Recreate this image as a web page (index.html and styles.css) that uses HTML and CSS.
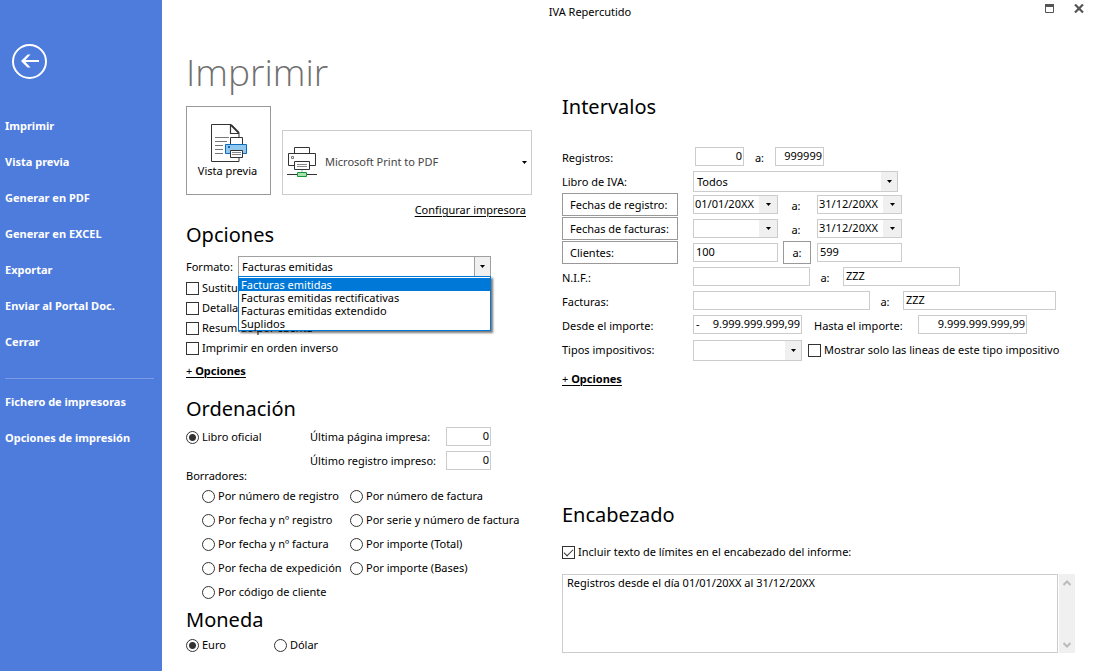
FILE: index.html
```html
<!DOCTYPE html>
<html lang="es">
<head>
<meta charset="utf-8">
<title>IVA Repercutido</title>
<link rel="stylesheet" href="styles.css">
</head>
<body>
<div class="app">
  <aside class="sidebar">
    <button class="back" type="button" aria-label="Volver">
      <svg width="35" height="35" viewBox="0 0 35 35" fill="none" stroke="#fff"><circle cx="17.500" cy="17.500" r="16.500" stroke-width="2"/><path d="M27 17H11" stroke-width="2"/><path d="M18.500 10.500H15.500L9 17L15.500 23.500H18.500L12.500 17z" fill="#fff" stroke="none"/></svg>
    </button>
    <nav class="menu">
      <a href="#">Imprimir</a>
      <a href="#">Vista previa</a>
      <a href="#">Generar en PDF</a>
      <a href="#">Generar en EXCEL</a>
      <a href="#">Exportar</a>
      <a href="#">Enviar al Portal Doc.</a>
      <a href="#">Cerrar</a>
      <hr>
      <a href="#">Fichero de impresoras</a>
      <a href="#">Opciones de impresión</a>
    </nav>
  </aside>

  <div class="window">
    <header class="titlebar">
      <span class="caption">IVA Repercutido</span>
      <div class="controls">
        <button type="button" aria-label="Maximizar"><svg width="10" height="10" viewBox="0 0 10 10"><path d="M.5 1.500h8v7h-8z" fill="none" stroke="#555"/><path d="M0 0h9v3H0z" fill="#555"/></svg></button>
        <button type="button" aria-label="Cerrar ventana"><svg width="10" height="10" viewBox="0 0 10 10"><path d="M1 .5l8 8M9 .5L1 8.500" stroke="#555" stroke-width="2.200"/></svg></button>
      </div>
    </header>

    <main class="content">
      <div class="col-left">
        <h1>Imprimir</h1>
        <div class="printer-row">
          <button class="preview" type="button">
            <svg width="37" height="39" viewBox="0 0 37 39" fill="none" stroke="#333"><path d="M.5.500H20L28 9V37.500H.5z" fill="#fff"/><path d="M19.500.500V9.500H28" stroke-width="1.200"/><path d="M20 1l8 8" stroke-width="1.800"/><path d="M4 13.500h14M4 17.500h12M4 21.500h8M4 25.500h8M4 29.500h8" stroke="#777"/><path d="M19.500 13.500h12v8h-12z" fill="#fff"/><path d="M14.500 20.500h21v9h-21z" fill="#90c8f0" stroke="#0f6cbd"/><path d="M17 23h2" stroke="#0f6cbd" stroke-width="2"/><path d="M19.500 26.500h12v7h-12z" fill="#fff"/><path d="M21 28.500h9M21 30.500h9" stroke="#888"/></svg>
            Vista previa
          </button>
          <button class="printer" type="button">
            <svg width="30" height="31" viewBox="0 0 30 31" fill="none" stroke="#333"><path d="M7.500 6.500V.5h15v6"/><path d="M7 18.500H1.500v-12h27v12H22" fill="#fff"/><path d="M7.500 6.500h15"/><path d="M4.500 9.500h2v2h-2z" stroke="#777"/><path d="M7.500 14.500h15v8h-15z" fill="#fff"/><path d="M10 17.500h10M10 19.500h10" stroke="#888"/><path d="M15 23v3" stroke="#aaa"/><path d="M0 27.500h30"/><path d="M10.500 25.500h9v4h-9z" fill="#a8e0ae" stroke="#109a3e"/></svg>
            <span>Microsoft Print to PDF</span>
            <svg class="arrow" width="5" height="3" viewBox="0 0 5 3"><path d="M0 0h5L2.500 3z"/></svg>
          </button>
        </div>
        <a class="link configure" href="#">Configurar impresora</a>

        <section class="options">
          <h2>Opciones</h2>
          <div class="format">
            <label for="formato">Formato:</label>
            <div class="combo strong">
              <select id="formato"><option>Facturas emitidas</option><option>Facturas emitidas rectificativas</option><option>Facturas emitidas extendido</option><option>Suplidos</option></select>
              <svg class="arrow" width="5" height="3" viewBox="0 0 5 3"><path d="M0 0h5L2.500 3z"/></svg>
              <ul class="list" role="listbox" aria-label="Formato">
                <li class="selected" role="option" aria-selected="true">Facturas emitidas</li>
                <li role="option">Facturas emitidas rectificativas</li>
                <li role="option">Facturas emitidas extendido</li>
                <li role="option">Suplidos</li>
              </ul>
            </div>
          </div>
          <label class="check"><input type="checkbox">Sustituir</label>
          <label class="check"><input type="checkbox">Detallar</label>
          <label class="check"><input type="checkbox">Resumido por cuenta</label>
          <label class="check"><input type="checkbox">Imprimir en orden inverso</label>
          <a class="link more" href="#">+ <b>Opciones</b></a>
        </section>

        <section class="order">
          <h2>Ordenación</h2>
          <div class="official">
            <label class="radio"><input type="radio" name="orden" checked>Libro oficial</label>
            <div class="last">
              <label for="pagina">Última página impresa:</label><input class="field num" id="pagina" type="text" value="0">
              <label for="registro">Último registro impreso:</label><input class="field num" id="registro" type="text" value="0">
            </div>
          </div>
          <p class="drafts-title">Borradores:</p>
          <div class="drafts">
            <label class="radio"><input type="radio" name="orden">Por número de registro</label>
            <label class="radio"><input type="radio" name="orden">Por número de factura</label>
            <label class="radio"><input type="radio" name="orden">Por fecha y nº registro</label>
            <label class="radio"><input type="radio" name="orden">Por serie y número de factura</label>
            <label class="radio"><input type="radio" name="orden">Por fecha y nº factura</label>
            <label class="radio"><input type="radio" name="orden">Por importe (Total)</label>
            <label class="radio"><input type="radio" name="orden">Por fecha de expedición</label>
            <label class="radio"><input type="radio" name="orden">Por importe (Bases)</label>
            <label class="radio"><input type="radio" name="orden">Por código de cliente</label>
          </div>
        </section>

        <section class="currency">
          <h2>Moneda</h2>
          <div class="currency-row">
            <label class="radio"><input type="radio" name="moneda" checked>Euro</label>
            <label class="radio"><input type="radio" name="moneda">Dólar</label>
          </div>
        </section>
      </div>

      <div class="col-right">
        <section class="ranges">
          <h2>Intervalos</h2>
          <div class="row"><label class="name" for="reg1">Registros:</label><input class="field num w-reg inset" id="reg1" type="text" value="0"><label class="to narrow" for="reg2">a:</label><input class="field num w-reg" id="reg2" type="text" value="999999"></div>
          <div class="row"><label class="name" for="libro">Libro de IVA:</label>
            <div class="combo w-book"><select id="libro"><option>Todos</option></select><svg class="arrow" width="5" height="3" viewBox="0 0 5 3"><path d="M0 0h5L2.500 3z"/></svg></div></div>
          <div class="row"><button class="name boxed" type="button">Fechas de registro:</button>
            <div class="date"><input type="text" aria-label="Registro desde" value="01/01/20XX"><button type="button" aria-label="Elegir"><svg width="5" height="3" viewBox="0 0 5 3"><path d="M0 0h5L2.500 3z"/></svg></button></div>
            <span class="to">a:</span>
            <div class="date"><input type="text" aria-label="Registro hasta" value="31/12/20XX"><button type="button" aria-label="Elegir"><svg width="5" height="3" viewBox="0 0 5 3"><path d="M0 0h5L2.500 3z"/></svg></button></div></div>
          <div class="row"><button class="name boxed" type="button">Fechas de facturas:</button>
            <div class="date"><input type="text" aria-label="Factura desde" value=""><button type="button" aria-label="Elegir"><svg width="5" height="3" viewBox="0 0 5 3"><path d="M0 0h5L2.500 3z"/></svg></button></div>
            <span class="to">a:</span>
            <div class="date"><input type="text" aria-label="Factura hasta" value="31/12/20XX"><button type="button" aria-label="Elegir"><svg width="5" height="3" viewBox="0 0 5 3"><path d="M0 0h5L2.500 3z"/></svg></button></div></div>
          <div class="row"><button class="name boxed" type="button">Clientes:</button><input class="field w-date" type="text" aria-label="Cliente desde" value="100"><button class="to-button" type="button">a:</button><input class="field w-date" type="text" aria-label="Cliente hasta" value="599"></div>
          <div class="row"><label class="name" for="nif1">N.I.F.:</label><input class="field w-nif" id="nif1" type="text"><label class="to mid" for="nif2">a:</label><input class="field w-nif" id="nif2" type="text" value="ZZZ"></div>
          <div class="row"><label class="name" for="fac1">Facturas:</label><input class="field w-fac1" id="fac1" type="text"><label class="to mid" for="fac2">a:</label><input class="field w-fac2" id="fac2" type="text" value="ZZZ"></div>
          <div class="row"><label class="name" for="imp1">Desde el importe:</label>
            <div class="amount"><span>-</span><input id="imp1" type="text" value="9.999.999.999,99"></div>
            <label class="until" for="imp2">Hasta el importe:</label><input class="field num w-amount" id="imp2" type="text" value="9.999.999.999,99"></div>
          <div class="row"><label class="name" for="tipos">Tipos impositivos:</label>
            <div class="combo w-amount low"><select id="tipos"><option></option></select><svg class="arrow" width="5" height="3" viewBox="0 0 5 3"><path d="M0 0h5L2.500 3z"/></svg></div>
            <label class="check only"><input type="checkbox">Mostrar solo las lineas de este tipo impositivo</label></div>
          <a class="link more" href="#">+ <b>Opciones</b></a>
        </section>

        <section class="heading">
          <h2>Encabezado</h2>
          <label class="check"><input type="checkbox" checked>Incluir texto de límites en el encabezado del informe:</label>
          <div class="memo">
            <textarea aria-label="Texto de límites">Registros desde el día 01/01/20XX al 31/12/20XX</textarea>
            <div class="scroll">
              <svg width="8" height="6" viewBox="0 0 8 6"><path d="M.5 5L4 1.500L7.500 5" fill="none" stroke="#bbb" stroke-width="2"/></svg>
              <svg width="8" height="6" viewBox="0 0 8 6"><path d="M.5 1L4 4.500L7.500 1" fill="none" stroke="#bbb" stroke-width="2"/></svg>
            </div>
          </div>
        </section>
      </div>
    </main>
  </div>
</div>
</body>
</html>
```
FILE: styles.css
```css
* { box-sizing: border-box; }

body {
  margin: 0;
  background: #fff;
  color: #000;
  font: 11px/16px "Noto Sans", "Open Sans", sans-serif;
}

button, input, select, textarea {
  margin: 0;
  padding: 0;
  border: 0;
  border-radius: 0;
  background: none;
  color: inherit;
  font: inherit;
  outline: 0;
}

svg { display: block; flex: none; }
label { white-space: nowrap; }

h1 {
  margin: 0;
  color: #707070;
  font: 300 37px/48px "Open Sans", "Noto Sans", sans-serif;
}

h2 {
  margin: 0;
  font: 400 20px/28px "Noto Sans", "Open Sans", sans-serif;
}

.app { display: flex; min-height: 100vh; }

/* Sidebar */
.sidebar {
  flex: none;
  width: 162px;
  padding: 44px 8px 0 5px;
  background: #4e7cdc;
}
.back { display: block; margin-left: 7px; }
.menu { display: flex; flex-direction: column; margin-top: 29px; }
.menu a {
  color: #fff;
  font-weight: 700;
  line-height: 36px;
  text-decoration: none;
  white-space: nowrap;
}
.menu hr {
  width: 100%;
  height: 1px;
  margin: 18px 0 5px;
  border: 0;
  background: #7b9ce4;
}

/* Title bar */
.window { display: flex; flex: 1; flex-direction: column; min-width: 0; }
.titlebar { display: flex; height: 24px; }
.caption { flex: 1; line-height: 24px; text-align: center; }
.controls {
  display: flex;
  flex: none;
  gap: 19px;
  align-items: flex-start;
  justify-content: flex-end;
  width: 75px;
  padding: 4px 9px 0 0;
}

.content { display: flex; flex: 1; gap: 30px; padding: 0 18px 0 24px; }
.col-left { flex: none; width: 346px; padding-top: 24px; }
.col-right { display: flex; flex: 1; flex-direction: column; min-width: 0; padding-top: 69px; }

/* Printer */
.printer-row { display: flex; gap: 11px; align-items: flex-end; margin-top: 10px; }
.preview {
  display: flex;
  flex-direction: column;
  align-items: center;
  justify-content: center;
  width: 85px;
  height: 89px;
  padding: 2px 2px 0 0;
  border: 1px solid #999;
}
.preview svg { margin-left: 4px; }
.printer {
  display: flex;
  flex: 1;
  gap: 8px;
  align-items: center;
  height: 65px;
  padding: 0 4px;
  border: 1px solid #ccc;
  color: #444;
}
.printer span { flex: 1; padding-bottom: 1px; text-align: left; }
.link { color: #000; text-decoration: underline; text-underline-offset: 2px; }
.configure { display: block; padding: 7px 6px 0 0; text-align: right; }
.more { display: block; width: max-content; }

/* Fields */
.field {
  width: 45px;
  height: 19px;
  padding: 0 3px 2px 2px;
  border: 1px solid #ccc;
}
.num { padding-right: 1px; text-align: right; }

.combo { position: relative; height: 21px; }
.combo select {
  width: 100%;
  height: 100%;
  padding: 0 18px 0 3px;
  border: 1px solid #ccc;
  background: linear-gradient(#f0f0f0, #f0f0f0) right / 16px 100% no-repeat;
  appearance: none;
}
.combo .arrow { position: absolute; top: 9px; right: 6px; pointer-events: none; }
.combo.strong { flex: 1; }
.combo.strong select {
  border-color: #a0a0a0;
  background-image: linear-gradient(90deg, #a0a0a0 1px, #f0f0f0 1px);
}

.check, .radio { display: flex; gap: 3px; align-items: center; }
.check input, .radio input {
  flex: none;
  width: 13px;
  height: 13px;
  border: 1px solid #333;
  background: #fff;
  appearance: none;
}
.radio input { border-radius: 50%; }
.radio input:checked { background: radial-gradient(circle, #333 3px, #fff 4px); }
.check input:checked::after {
  display: block;
  width: 8px;
  height: 4px;
  margin: 2px 0 0 1px;
  border: solid #333;
  border-width: 0 0 1px 1px;
  content: "";
  transform: rotate(-45deg);
}

/* Options */
.options { padding-top: 3px; }
.format { display: flex; align-items: center; margin: 7px 41px 1px 0; }
.format label { width: 52px; }
.options .check { height: 20px; }
.options .more { margin-top: 5px; }
.list {
  position: absolute;
  z-index: 1;
  top: 20px;
  left: 0;
  width: 100%;
  margin: 0;
  padding: 1px 0 0;
  border: 1px solid #0078d7;
  background: #fff;
  box-shadow: 2px 2px 2px #0008;
  line-height: 13px;
  list-style: none;
}
.list li { padding-left: 2px; }
.list .selected { background: #0078d7; color: #fff; }

/* Order */
.order { padding-top: 16px; }
.official { display: flex; justify-content: space-between; margin-right: 41px; padding-top: 1px; }
.official .radio { height: 26px; }
.last { display: grid; grid-template-columns: 136px 45px; align-items: center; grid-auto-rows: 24px; }
.last label { padding-top: 2px; }
.drafts-title { margin: -4px 0 0; }
.drafts {
  display: grid;
  grid-template-columns: 148px 1fr;
  grid-auto-rows: 24px;
  padding-left: 16px;
}
.currency { padding-top: 2px; }
.currency-row { display: flex; gap: 48px; padding-top: 3px; }

/* Ranges */
.ranges h2 { margin-bottom: 24px; }
.row { display: flex; align-items: flex-start; height: 24px; padding-top: 2px; }
.name { flex: none; width: 131px; line-height: 22px; }
.boxed, .to-button {
  flex: none;
  height: 23px;
  margin-top: -2px;
  border: 1px solid #999;
  line-height: 21px;
}
.boxed { width: 116px; margin-right: 15px; padding-left: 7px; text-align: left; }
.to { flex: none; width: 39px; padding-right: 3px; line-height: 22px; text-align: center; }
.to.narrow { width: 31px; padding-right: 0; }
.to.mid { width: 33px; }
.to-button { width: 28px; margin: -2px 6px 0 5px; }
.w-reg { width: 49px; }
.inset { margin-left: 2px; }
.w-book { width: 205px; }
.w-date { width: 85px; }
.w-nif { width: 117px; }
.w-fac1 { width: 177px; }
.w-fac2 { width: 153px; }
.w-amount { width: 109px; }
.date {
  display: flex;
  width: 85px;
  height: 19px;
  border: 1px solid #ccc;
}
.date input { flex: 1; min-width: 0; padding: 0 0 2px 1px; }
.date button {
  display: flex;
  flex: none;
  align-items: center;
  justify-content: center;
  width: 18px;
  background: #f0f0f0;
}
.amount {
  display: flex;
  width: 109px;
  height: 19px;
  padding: 0 1px 0 2px;
  border: 1px solid #ccc;
}
.amount input { flex: 1; min-width: 0; padding-bottom: 2px; text-align: right; }
.until { width: 116px; padding-left: 12px; line-height: 22px; }
.low { margin-top: 1px; }
.only { height: 22px; padding-left: 6px; }
.ranges .more { margin-top: 10px; }

/* Heading */
.heading { margin-top: 114px; }
.heading .check { margin-top: 15px; }
.memo { display: flex; gap: 1px; margin-top: 14px; }
.memo textarea {
  flex: 1;
  height: 79px;
  padding: 0 4px;
  border: 1px solid #ccc;
  overflow: hidden;
  resize: none;
}
.scroll {
  display: flex;
  flex-direction: column;
  align-items: center;
  justify-content: space-between;
  width: 16px;
  padding: 6px 0 5px;
  background: #f0f0f0;
}
```
